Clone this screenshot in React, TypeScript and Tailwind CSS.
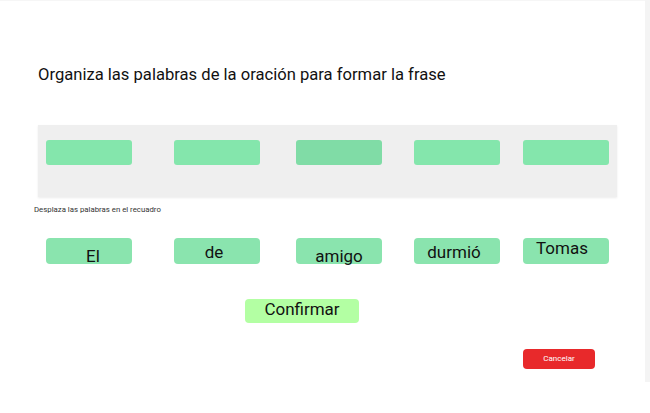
import React from 'react';

const slots = ['ml-0', 'ml-[42px]', 'ml-[36px]', 'ml-[32px]', 'ml-[23px]'];

const words = [
	{ text: 'El', cls: 'ml-0 pt-[8px] pl-[8px]' },
	{ text: 'de', cls: 'ml-[42px] pt-[4px] pr-[6px]' },
	{ text: 'amigo', cls: 'ml-[36px] pt-[8px]' },
	{ text: 'durmió', cls: 'ml-[32px] pt-[4px] pr-[6px]' },
	{ text: 'Tomas', cls: 'ml-[23px] pt-0 pr-[8px]' },
];

export default function App() {
	return (
		<div className="flex h-[413px] w-[650px] bg-white font-['Roboto',sans-serif] text-[#111]">
			<div className="flex h-[382px] w-[645px] flex-col border-t border-[#f6f6f6]">
				<h1 className="ml-[38px] mt-[62px] text-[16.6px] leading-[24px] font-normal">
					Organiza las palabras de la oración para formar la frase
				</h1>

				<div className="ml-[38px] mt-[38px] flex h-[72px] w-[579px] bg-[#efefef] px-[8px] pt-[15px] shadow-[0_1px_2px_rgba(0,0,0,0.08)]">
					{slots.map((ml, i) => (
						<div
							key={i}
							className={`${ml} h-[25px] w-[86px] rounded-[3px] ${i === 2 ? 'bg-[#80dca6]' : 'bg-[#84e6ac]'}`}
						/>
					))}
				</div>

				<p className="ml-[34px] mt-[8px] text-[7.8px] leading-[10px] text-[#333]">
					Desplaza las palabras en el recuadro
				</p>

				<div className="ml-[46px] mt-[23px] flex">
					{words.map((w) => (
						<div
							key={w.text}
							className={`${w.cls} flex h-[26px] w-[86px] justify-center rounded-[4px] bg-[#8ae4ae] text-[17px] leading-[20px]`}
						>
							{w.text}
						</div>
					))}
				</div>

				<button className="ml-[245px] mt-[35px] flex h-[24px] w-[114px] justify-center rounded-[4px] bg-[#b3ffa3] text-[17px] leading-[20px]">
					Confirmar
				</button>

				<button className="ml-[523px] mt-[26px] flex h-[20px] w-[72px] items-center justify-center rounded-[4px] bg-[#e8292b] text-[8px] leading-[10px] text-white">
					Cancelar
				</button>
			</div>
			<div className="h-[382px] w-[5px] bg-[#f4f4f4]" />
		</div>
	);
}
